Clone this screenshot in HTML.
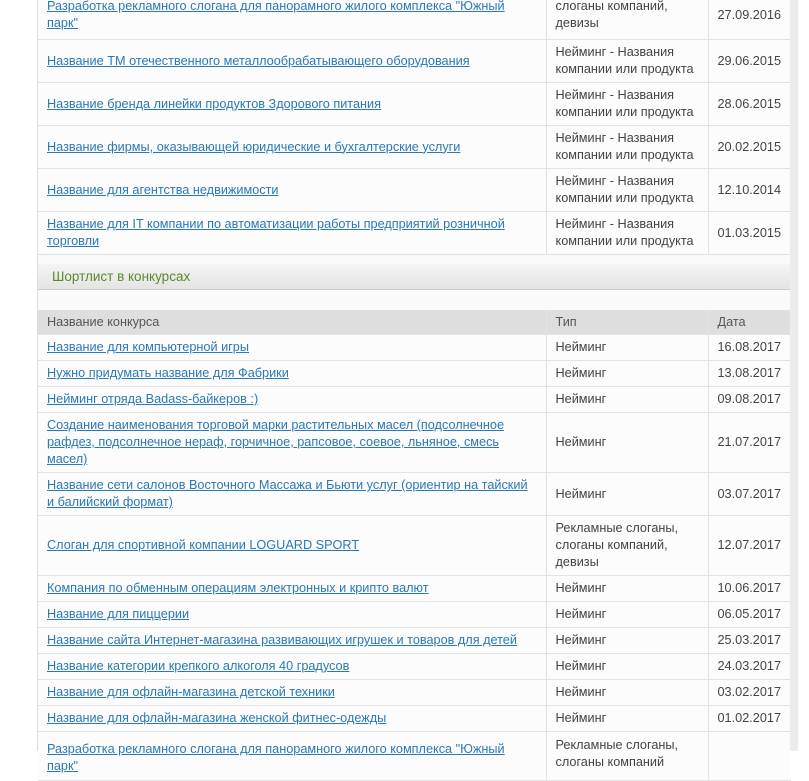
<!DOCTYPE html>
<html><head><meta charset="utf-8"><style>
body{margin:0;background:#fff;font-family:"Liberation Sans","DejaVu Sans",sans-serif;font-size:12.7px;color:#444;width:809px;height:751px;overflow:hidden;position:relative}
.wrap{position:absolute;left:37px;top:0;width:753px;height:751px;background:#fafafa;border-left:1px solid #ddd}
.strip{position:absolute;left:790px;top:0;width:8px;height:751px;background:#ececec}
table{border-collapse:collapse;width:753px;table-layout:fixed;background:#fcfcfd}
td{border:1px solid #e2e2e2;padding:0 9px;line-height:17px;vertical-align:middle}
td:first-child{border-left:none;padding-right:14px}
td:last-child{border-right:none}
a{color:#2a79b6;text-decoration:underline}
.h td{background:#dedede;color:#555;height:23px}
.sec{position:absolute;left:0;width:753px}
.bar{height:26px;background:linear-gradient(#f4f4f4,#e4e4e4);border-bottom:1px solid #ccc;color:#5a8a2a;font-size:13.5px;line-height:26px;padding-left:14px;box-sizing:border-box;width:753px}
</style></head><body>
<div class="wrap">
<div class="sec" style="top:-10px">
<table>
<col style="width:508px"><col style="width:162px"><col style="width:83px">
<tr style="height:49px"><td><a>Разработка рекламного слогана для панорамного жилого комплекса "Южный парк"</a></td><td>слоганы компаний,<br>девизы</td><td>27.09.2016</td></tr>
<tr style="height:43px"><td><a>Название ТМ отечественного металлообрабатывающего оборудования</a></td><td>Нейминг - Названия компании или продукта</td><td>29.06.2015</td></tr>
<tr style="height:43px"><td><a>Название бренда линейки продуктов Здорового питания</a></td><td>Нейминг - Названия компании или продукта</td><td>28.06.2015</td></tr>
<tr style="height:43px"><td><a>Название фирмы, оказывающей юридические и бухгалтерские услуги</a></td><td>Нейминг - Названия компании или продукта</td><td>20.02.2015</td></tr>
<tr style="height:43px"><td><a>Название для агентства недвижимости</a></td><td>Нейминг - Названия компании или продукта</td><td>12.10.2014</td></tr>
<tr style="height:43px"><td><a>Название для IT компании по автоматизации работы предприятий розничной торговли</a></td><td>Нейминг - Названия компании или продукта</td><td>01.03.2015</td></tr>
</table></div>
<div class="sec" style="top:264px"><div class="bar">Шортлист в конкурсах</div></div>
<div class="sec" style="top:310px">
<table>
<col style="width:508px"><col style="width:162px"><col style="width:83px">
<tr class="h"><td>Название конкурса</td><td>Тип</td><td>Дата</td></tr>
<tr style="height:26px"><td><a>Название для компьютерной игры</a></td><td>Нейминг</td><td>16.08.2017</td></tr>
<tr style="height:26px"><td><a>Нужно придумать название для Фабрики</a></td><td>Нейминг</td><td>13.08.2017</td></tr>
<tr style="height:26px"><td><a>Нейминг отряда Badass-байкеров :)</a></td><td>Нейминг</td><td>09.08.2017</td></tr>
<tr style="height:60px"><td><a>Создание наименования торговой марки растительных масел (подсолнечное рафдез, подсолнечное нераф, горчичное, рапсовое, соевое, льняное, смесь масел)</a></td><td>Нейминг</td><td>21.07.2017</td></tr>
<tr style="height:43px"><td><a>Название сети салонов Восточного Массажа и Бьюти услуг (ориентир на тайский и балийский формат)</a></td><td>Нейминг</td><td>03.07.2017</td></tr>
<tr style="height:60px"><td><a>Слоган для спортивной компании LOGUARD SPORT</a></td><td>Рекламные слоганы, слоганы компаний, девизы</td><td>12.07.2017</td></tr>
<tr style="height:26px"><td><a>Компания по обменным операциям электронных и крипто валют</a></td><td>Нейминг</td><td>10.06.2017</td></tr>
<tr style="height:26px"><td><a>Название для пиццерии</a></td><td>Нейминг</td><td>06.05.2017</td></tr>
<tr style="height:26px"><td><a>Название сайта Интернет-магазина развивающих игрушек и товаров для детей</a></td><td>Нейминг</td><td>25.03.2017</td></tr>
<tr style="height:26px"><td><a>Название категории крепкого алкоголя 40 градусов</a></td><td>Нейминг</td><td>24.03.2017</td></tr>
<tr style="height:26px"><td><a>Название для офлайн-магазина детской техники</a></td><td>Нейминг</td><td>03.02.2017</td></tr>
<tr style="height:26px"><td><a>Название для офлайн-магазина женской фитнес-одежды</a></td><td>Нейминг</td><td>01.02.2017</td></tr>
<tr style="height:49px"><td style="vertical-align:top;padding-top:9px"><a>Разработка рекламного слогана для панорамного жилого комплекса "Южный парк"</a></td><td style="vertical-align:top;padding-top:5px">Рекламные слоганы,<br>слоганы компаний</td><td></td></tr>
</table></div>
</div>
<div class="strip"></div>
</body></html>
